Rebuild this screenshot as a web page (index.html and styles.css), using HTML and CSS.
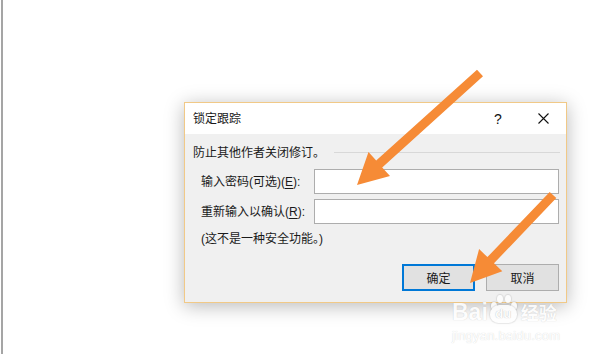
FILE: index.html
```html
<!DOCTYPE html>
<html>
<head>
<meta charset="utf-8">
<link rel="stylesheet" href="styles.css">
</head>
<body>
<div class="page">
  <div class="dialog">
    <div class="titlebar">
      <span class="title">锁定跟踪</span>
      <span class="spacer"></span>
      <span class="tb-btn help">?</span>
      <span class="tb-btn close">
        <svg width="11" height="11" viewBox="0 0 11 11"><path d="M0.5 0.5L10.5 10.5M10.5 0.5L0.5 10.5" stroke="#111" stroke-width="1.1" fill="none"/></svg>
      </span>
    </div>
    <div class="body">
      <div class="section">
        <span>防止其他作者关闭修订。</span>
        <span class="rule"></span>
      </div>
      <div class="form">
        <label class="lbl">输入密码(可选)(<u>E</u>):</label>
        <span class="input"></span>
        <label class="lbl">重新输入以确认(<u>R</u>):</label>
        <span class="input"></span>
      </div>
      <div class="note">(这不是一种安全功能。)</div>
      <div class="buttons">
        <span class="btn primary">确定</span>
        <span class="btn">取消</span>
      </div>
    </div>
  </div>
</div>

<div class="watermark">
  <div class="wm-top"><span>Bai</span><span class="paw"><i class="toe t1"></i><i class="toe t2"></i><i class="toe t3"></i><i class="toe t4"></i><span class="pad">du</span></span><span class="cn">经验</span></div>
  <div class="wm-url">jingyan.baidu.com</div>
</div>

<svg class="arrows" width="591" height="354" viewBox="0 0 591 354">
  <polygon fill="#f68b36" points="357,185 390,176 382.2,167.4 483,76.3 477,69.7 376.2,160.4 368.5,152"/>
  <polygon fill="#f68b36" points="470,283 502.3,271.3 494,263.3 556.3,198.1 549.7,191.9 487.4,257.1 479.1,249.1"/>
</svg>
</body>
</html>
```
FILE: styles.css
```css
html, body {
  margin: 0;
  padding: 0;
  background: #ffffff;
}
body {
  width: 591px;
  height: 354px;
  overflow: hidden;
  position: relative;
  font-family: "Liberation Sans", "Noto Sans CJK SC", sans-serif;
  font-size: 12px;
  color: #1a1a1a;
}
.page {
  margin-left: 1px;
  border-left: 2px solid #a5a5a5;
  height: 354px;
  box-sizing: border-box;
  padding-top: 102px;
  padding-left: 181px;
}
.dialog {
  width: 381px;
  border: 1px solid #f1c987;
  background: #f0f0f0;
  box-shadow: 0 3px 18px rgba(0, 0, 0, 0.28);
}
.titlebar {
  height: 31px;
  background: #ffffff;
  display: flex;
  align-items: center;
  padding-left: 8px;
}
.title {
  font-size: 12px;
  line-height: 16px;
  margin-top: 1px;
}
.spacer { flex: 1; }
.tb-btn {
  display: flex;
  align-items: center;
  justify-content: center;
  height: 31px;
}
.help {
  width: 30px;
  margin-right: 7px;
  font-size: 14px;
  color: #111;
}
.close {
  width: 46px;
}
.body {
  padding: 11px 0 11px 8px;
}
.section {
  display: flex;
  align-items: center;
  height: 16px;
  line-height: 16px;
  padding-right: 6px;
}
.rule {
  flex: 1;
  height: 1px;
  background: #d8d8d8;
  margin-left: 9px;
  margin-top: -1px;
}
.form {
  margin-top: 8px;
  padding-left: 8px;
  display: grid;
  grid-template-columns: 113px 245px;
  row-gap: 5px;
  align-items: center;
}
.lbl {
  line-height: 16px;
}
.lbl u {
  text-underline-offset: 2px;
}
.input {
  display: block;
  height: 25px;
  box-sizing: border-box;
  border: 1px solid #adadad;
  background: #ffffff;
}
.note {
  margin-top: 7px;
  padding-left: 8px;
  line-height: 16px;
  height: 16px;
  word-spacing: 0;
}
.note-gap { margin-left: 3px; }
.buttons {
  margin-top: 17px;
  display: flex;
  justify-content: flex-end;
  gap: 11px;
  padding-right: 7px;
}
.btn {
  width: 73px;
  height: 27px;
  box-sizing: border-box;
  border: 1px solid #adadad;
  background: #e1e1e1;
  display: flex;
  align-items: center;
  justify-content: center;
  font-size: 12px;
}
.btn.primary {
  border: 2px solid #0078d7;
}
.arrows {
  position: absolute;
  left: 0;
  top: 0;
}
.watermark {
  position: absolute;
  left: 452px;
  top: 293px;
  color: #ffffff;
  font-family: "Liberation Sans", "Noto Sans CJK SC", sans-serif;
  opacity: 0.85;
}
.wm-top {
  display: flex;
  align-items: flex-end;
  font-size: 23px;
  font-weight: bold;
  height: 32px;
  line-height: 26px;
  text-shadow: 0 0 1px rgba(0,0,0,0.22);
}
.paw {
  position: relative;
  width: 28px;
  height: 32px;
  margin: 0 2px;
}
.pad {
  position: absolute;
  left: 0;
  bottom: 2px;
  width: 27px;
  height: 18px;
  border-radius: 10px 10px 9px 9px;
  background: #fff;
  box-shadow: 0 0 1px 1px rgba(0,0,0,0.1);
  font-size: 13px;
  line-height: 18px;
  text-align: center;
  color: #fff;
  text-shadow: 0 0 1px rgba(0,0,0,0.35);
}
.toe {
  position: absolute;
  width: 6px;
  height: 8px;
  border-radius: 50%;
  background: #fff;
  box-shadow: 0 0 1px 1px rgba(0,0,0,0.1);
}
.t1 { left: 1px; top: 9px; }
.t2 { left: 7px; top: 2px; }
.t3 { left: 15px; top: 2px; }
.t4 { left: 21px; top: 9px; }
.cn {
  font-family: "Noto Sans CJK SC", sans-serif;
  font-size: 18px;
  font-weight: bold;
  margin-left: 1px;
}
.wm-url {
  font-size: 13px;
  line-height: 16px;
  margin-top: 3px;
  letter-spacing: 0.2px;
  text-shadow: 0 0 1px rgba(0,0,0,0.22);
}
```
